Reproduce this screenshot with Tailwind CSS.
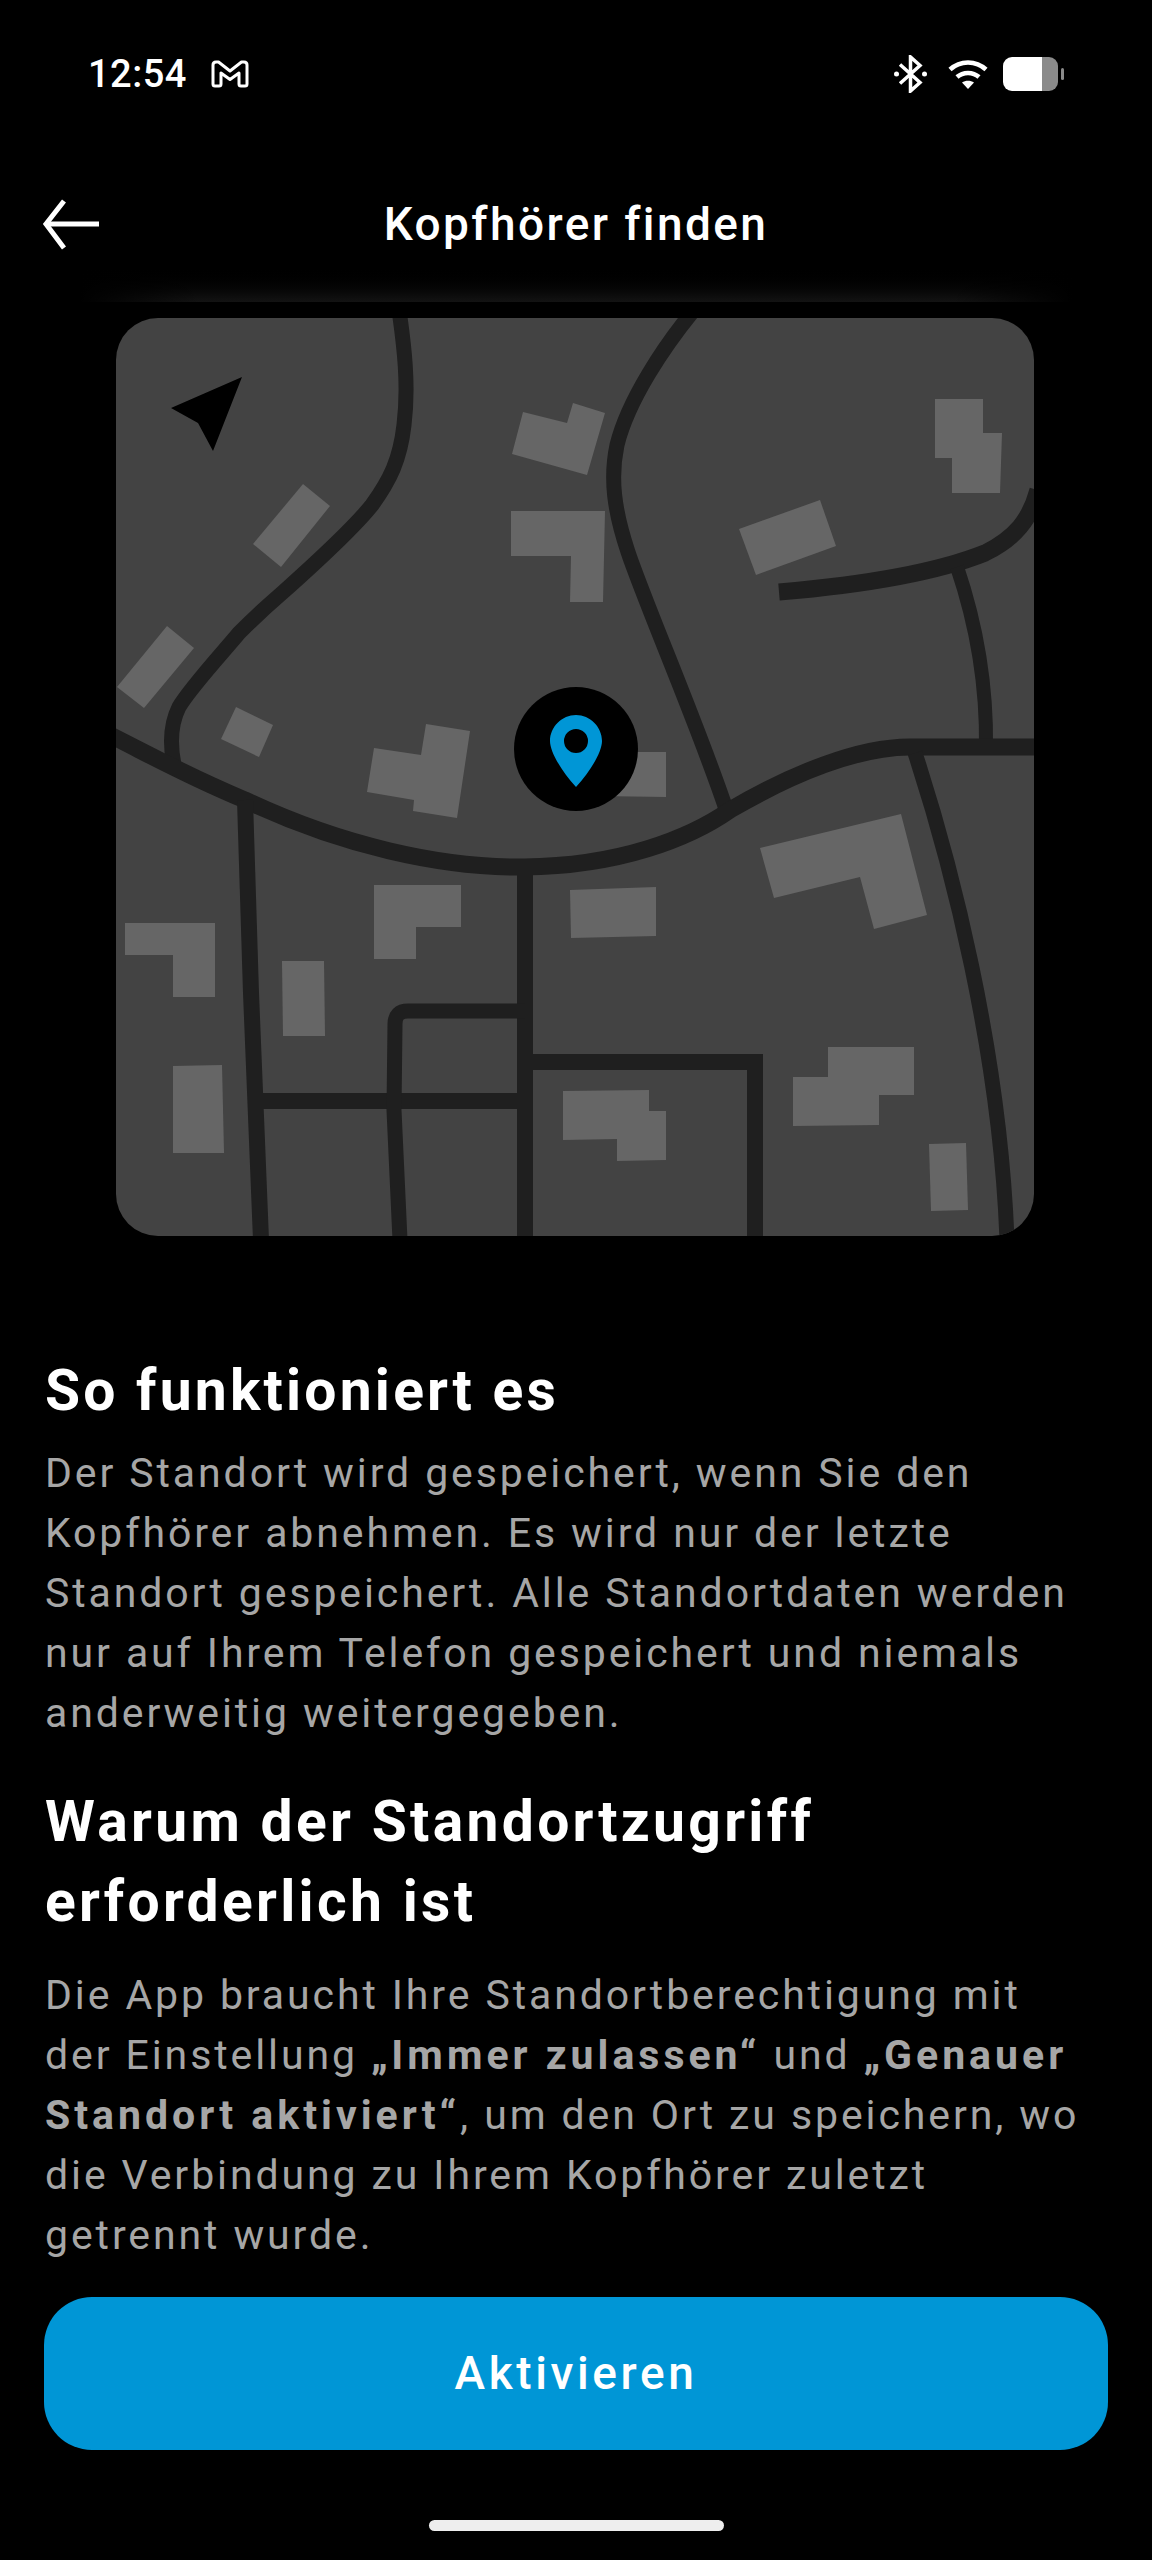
<!DOCTYPE html>
<html lang="de">
<head>
<meta charset="utf-8">
<title>Kopfhörer finden</title>
<script src="https://cdn.jsdelivr.net/npm/@tailwindcss/browser@4"></script>
</head>
<body class="bg-black">
<div class="flex flex-col w-[1152px] h-[2560px] overflow-hidden bg-black text-white font-['Roboto',sans-serif]">

  <!-- status bar -->
  <div class="flex items-center justify-between h-[148px] pl-[88px] pr-[88px] shrink-0">
    <div class="flex items-center gap-[24px]">
      <span class="text-[38px] leading-none font-medium tracking-[0.5px]">12:54</span>
      <svg width="38" height="28" viewBox="0 0 38 28" fill="none" stroke="#fff" stroke-width="3" stroke-linejoin="round">
        <path d="M2 24V5Q2 2 5 2H7.5L19 11 30.5 2H33Q36 2 36 5V24Q36 26 34 26H30Q28 26 28 24V13L19 19.5 10 13V24Q10 26 8 26H4Q2 26 2 24Z"/>
      </svg>
    </div>
    <div class="flex items-center">
      <svg width="33" height="38" viewBox="0 0 33 38" fill="none" stroke="#fff" stroke-width="3.5">
        <path d="M6 9.5 26 27.5 16.5 36V2L26 10.5 6 28.5"/>
        <circle cx="2.5" cy="19" r="2.5" fill="#fff" stroke="none"/>
        <circle cx="30.5" cy="19" r="2.5" fill="#fff" stroke="none"/>
      </svg>
      <svg class="ml-[21px]" width="40" height="29" viewBox="0 0 40 29" fill="none" stroke="#fff" stroke-width="4.5">
        <path d="M2 9.5C12 0 28 0 38 9.5"/>
        <path d="M9 17C15 11.5 25 11.5 31 17"/>
        <path d="M20 29 14 22.5C17.5 20 22.5 20 26 22.5Z" fill="#fff" stroke="none"/>
      </svg>
      <div class="flex items-center ml-[15px]">
        <div class="flex w-[55px] h-[34px] rounded-[9px] overflow-hidden">
          <div class="w-[39px] bg-white"></div>
          <div class="flex-1 bg-[#8a8a8a]"></div>
        </div>
        <div class="w-[3px] h-[12px] ml-[3px] rounded-full bg-[#8a8a8a]"></div>
      </div>
    </div>
  </div>

  <!-- header -->
  <div class="relative flex items-center justify-center h-[152px] shrink-0">
    <svg class="absolute left-[42px] top-[50px]" width="60" height="54" viewBox="0 0 60 54" fill="none" stroke="#fff" stroke-width="5">
      <path d="M57 26H4"/>
      <path d="M22 3 4 26 22 50"/>
    </svg>
    <h1 class="text-[46px] leading-none font-medium tracking-[2.4px]">Kopfhörer finden</h1>
    <div class="absolute left-[80px] right-[80px] bottom-[-2px] h-[38px] bg-gradient-to-b from-black to-[#131313]">
      <div class="w-full h-full bg-[linear-gradient(90deg,#000,transparent_12%,transparent_88%,#000)]"></div>
    </div>
  </div>

  <!-- map -->
  <svg class="block mt-[18px] ml-[116px] shrink-0 rounded-[42px]" width="918" height="918" viewBox="116 318 918 918">
    <rect x="116" y="318" width="918" height="918" fill="#434343"/>
    <g fill="#666666">
      <path d="M523 412 567 423 573 403 605 413 587 475 512 454Z"/>
      <path d="M511 511H605L603 602H570L571 556H511Z"/>
      <path d="M935 399H983V433H1002L1000 493H952V458H935Z"/>
      <path d="M820 500 836 546 756 575 739 529Z"/>
      <path d="M303 484 330 506 281 567 253 544Z"/>
      <path d="M167 626 194 648 144 708 117 687Z"/>
      <path d="M236 707 273 725 259 757 221 739Z"/>
      <path d="M426 724 470 731 457 818 413 811 414 800 367 792 374 748 421 755Z"/>
      <path d="M600 752H666V797L600 796Z"/>
      <path d="M374 885H461V927H416V959H374Z"/>
      <path d="M570 890 656 887 656 936 571 938Z"/>
      <path d="M901 814 927 915 874 929 860 877 774 898 760 848Z"/>
      <path d="M125 923H215V997H173V955H125Z"/>
      <path d="M282 961H324L325 1036H283Z"/>
      <path d="M173 1066 222 1065 224 1153H173Z"/>
      <path d="M828 1047H914V1095H879V1125L793 1126V1077H828Z"/>
      <path d="M563 1091 649 1090V1111H666V1160L617 1161V1139L563 1140Z"/>
      <path d="M929 1144 966 1143 968 1210 931 1211Z"/>
    </g>
    <g fill="none" stroke="#1f1f1f" stroke-width="15">
      <path d="M399 310C404 345 409 385 404 425 400 460 390 480 372 505 352 530 310 568 282 593 260 612 250 622 239 633 225 650 190 688 179 707 170 725 170 745 174 765"/>
      <path d="M694 310C665 345 628 400 617 445 610 478 614 510 628 552 645 603 700 730 727 812"/>
      <path d="M779 592C850 586 930 575 985 553 1015 538 1030 520 1038 490" stroke-width="17"/>
      <path d="M957 567C975 620 987 680 986 748" stroke-width="14"/>
      <path d="M110 735C150 755 185 775 245 800 340 845 440 868 524 867 620 866 690 838 730 810 790 775 860 745 915 747H1040" stroke-width="17"/>
      <path d="M245 800 251 993 261 1240" stroke-width="16"/>
      <path d="M525 865V1240" stroke-width="16"/>
      <path d="M251 1101H525" stroke-width="16"/>
      <path d="M525 1011H408Q395 1011 395 1024L394 1110 400 1240"/>
      <path d="M525 1062H755V1240" stroke-width="16"/>
      <path d="M915 753C950 860 1000 1050 1007 1240" stroke-width="15"/>
    </g>
    <path d="M242 377 171 408 198 423 213 451Z" fill="#000"/>
    <circle cx="576" cy="749" r="62" fill="#000"/>
    <path fill-rule="evenodd" d="M576 715C590 715 602 727 602 741 602 752 590 772 576 787 562 772 550 752 550 741 550 727 562 715 576 715ZM576 729A12 12 0 1 0 576 753 12 12 0 1 0 576 729Z" fill="#0096d6"/>
  </svg>

  <!-- text -->
  <div class="px-[45px] shrink-0">
    <h2 class="mt-[115px] text-[57px] leading-[80px] font-bold tracking-[3.2px]">So funktioniert es</h2>
    <p class="mt-[12px] text-[41px] leading-[60px] tracking-[2.9px] text-[#a6a6a6] whitespace-nowrap">Der Standort wird gespeichert, wenn Sie den<br>Kopfhörer abnehmen. Es wird nur der letzte<br>Standort gespeichert. Alle Standortdaten werden<br>nur auf Ihrem Telefon gespeichert und niemals<br>anderweitig weitergegeben.</p>
    <h2 class="mt-[39px] text-[57px] leading-[80px] font-bold tracking-[3.3px]">Warum der Standortzugriff<br>erforderlich ist</h2>
    <p class="mt-[23px] text-[41px] leading-[60px] tracking-[2.9px] text-[#a6a6a6] whitespace-nowrap">Die App braucht Ihre Standortberechtigung mit<br>der Einstellung <b class="font-bold tracking-[4px]">„Immer zulassen“</b> und <b class="font-bold tracking-[4px]">„Genauer<br>Standort aktiviert“</b>, um den Ort zu speichern, wo<br>die Verbindung zu Ihrem Kopfhörer zuletzt<br>getrennt wurde.</p>
  </div>

  <!-- action -->
  <button class="flex items-center justify-center mt-[32px] mx-[44px] h-[153px] rounded-[48px] bg-[#0096d6] text-[46px] font-medium tracking-[3.6px] text-white shrink-0">Aktivieren</button>

  <!-- home indicator -->
  <div class="mt-[70px] mx-auto w-[295px] h-[11px] rounded-full bg-[#eeeeee] shrink-0"></div>
</div>
</body>
</html>
